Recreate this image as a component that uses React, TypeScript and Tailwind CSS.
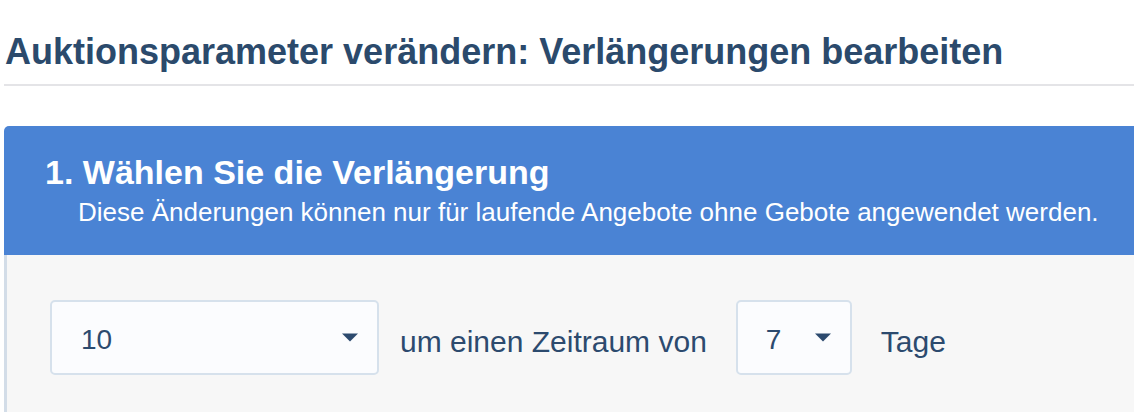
import React from 'react';

const Caret: React.FC = () => (
  <svg width="16" height="9" viewBox="0 0 16 9" className="shrink-0">
    <path d="M0 0.5 H16 L8 8.5 Z" fill="#2c4a6e" />
  </svg>
);

interface SelectBoxProps {
  value: string;
  width: string;
  padLeft: string;
}

const SelectBox: React.FC<SelectBoxProps> = ({ value, width, padLeft }) => (
  <div
    className={`${width} ${padLeft} h-[75px] flex items-center justify-between pr-[19px] bg-[#fbfcfe] border-2 border-[#d6e1ec] rounded-[5px] text-[28px] text-[#2c4a6e]`}
  >
    <span className="mt-[4px]">{value}</span>
    <Caret />
  </div>
);

export default function App() {
  return (
    <div className="w-[1134px] h-[412px] overflow-hidden bg-white font-['Liberation_Sans',Arial,sans-serif]">
      <div className="pl-[5px] pt-[30px]">
        <h1 className="text-[36px] leading-[44px] font-bold text-[#2b4a6c] whitespace-nowrap">
          Auktionsparameter verändern: Verlängerungen bearbeiten
        </h1>
      </div>
      <div className="ml-[4px] mt-[10px] h-[2px] bg-[#e4e4e7]" />

      <div className="ml-[4px] mt-[40px]">
        <div className="h-[129px] bg-[#4a83d4] rounded-tl-[5px] pl-[41px] pt-[26px] text-white whitespace-nowrap">
          <h2 className="text-[34px] leading-[40px] font-bold">1. Wählen Sie die Verlängerung</h2>
          <p className="mt-[5px] pl-[33px] text-[26px] leading-[30px]">
            Diese Änderungen können nur für laufende Angebote ohne Gebote angewendet werden.
          </p>
        </div>
        <div className="h-[200px] bg-[#f7f7f7] border-l-[3px] border-[#d3dde8] pl-[43px] pt-[45px]">
          <div className="flex items-center text-[30px] text-[#2c4a6e] whitespace-nowrap">
            <SelectBox value="10" width="w-[329px]" padLeft="pl-[29px]" />
            <span className="ml-[21px] mt-[8px]">um einen Zeitraum von</span>
            <div className="ml-[29px]">
              <SelectBox value="7" width="w-[116px]" padLeft="pl-[28px]" />
            </div>
            <span className="ml-[29px] mt-[8px]">Tage</span>
          </div>
        </div>
      </div>
    </div>
  );
}
